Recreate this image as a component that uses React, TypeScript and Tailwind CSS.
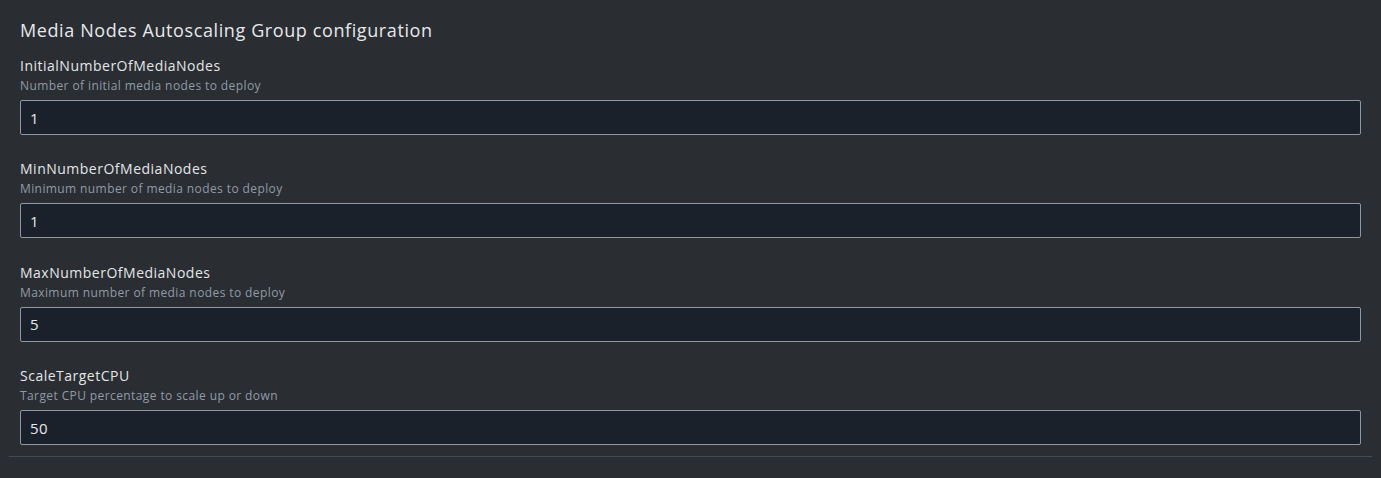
import React from "react";

const fields = [
  { label: "InitialNumberOfMediaNodes", desc: "Number of initial media nodes to deploy", value: "1" },
  { label: "MinNumberOfMediaNodes", desc: "Minimum number of media nodes to deploy", value: "1" },
  { label: "MaxNumberOfMediaNodes", desc: "Maximum number of media nodes to deploy", value: "5" },
  { label: "ScaleTargetCPU", desc: "Target CPU percentage to scale up or down", value: "50" },
];

export default function App() {
  return (
    <div
      className="w-[1381px] h-[478px] bg-[#2a2d32] px-[9px]"
      style={{ fontFamily: '"Open Sans", "Noto Sans", sans-serif' }}
    >
      <div className="border-b border-[#434a52] px-[11px] pt-[18px] pb-[11px]">
        <h2 className="text-[18px] leading-[24px] tracking-[0.6px] text-[#e6e8eb] mb-[14px]">
          Media Nodes Autoscaling Group configuration
        </h2>
        <div className="flex flex-col gap-[24.4px]">
          {fields.map((f) => (
            <div key={f.label} className="flex flex-col">
              <label className="text-[14px] leading-[20px] tracking-[0.5px] text-[#e3e6e9]">{f.label}</label>
              <div className="text-[12px] leading-[20px] tracking-[0.4px] text-[#8f9ba8] mb-[4px]">{f.desc}</div>
              <input
                readOnly
                value={f.value}
                className="h-[35px] w-full bg-[#1a212b] border border-[#8d98a6] rounded-[2px] px-[9px] text-[15px] tracking-[0.3px] text-[#e6e8eb] outline-none"
                style={{ fontFamily: '"Open Sans", "Noto Sans", sans-serif' }}
              />
            </div>
          ))}
        </div>
      </div>
    </div>
  );
}
